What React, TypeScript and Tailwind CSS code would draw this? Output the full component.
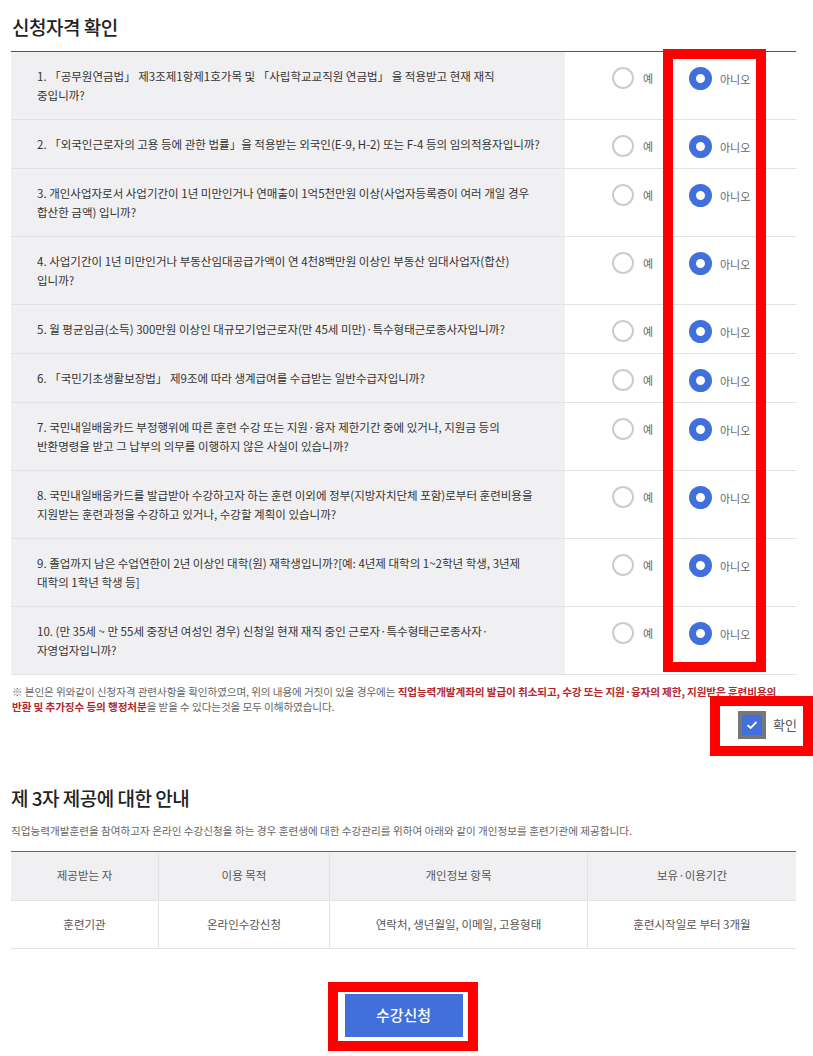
import React from "react";

const questions: string[][] = [
  [
    "1. 「공무원연금법」 제3조제1항제1호가목 및 「사립학교교직원 연금법」 을 적용받고 현재 재직",
    "중입니까?",
  ],
  [
    "2. 「외국인근로자의 고용 등에 관한 법률」을 적용받는 외국인(E-9, H-2) 또는 F-4 등의 임의적용자입니까?",
  ],
  [
    "3. 개인사업자로서 사업기간이 1년 미만인거나 연매출이 1억5천만원 이상(사업자등록증이 여러 개일 경우",
    "합산한 금액) 입니까?",
  ],
  [
    "4. 사업기간이 1년 미만인거나 부동산임대공급가액이 연 4천8백만원 이상인 부동산 임대사업자(합산)",
    "입니까?",
  ],
  [
    "5. 월 평균임금(소득) 300만원 이상인 대규모기업근로자(만 45세 미만)·특수형태근로종사자입니까?",
  ],
  ["6. 「국민기초생활보장법」 제9조에 따라 생계급여를 수급받는 일반수급자입니까?"],
  [
    "7. 국민내일배움카드 부정행위에 따른 훈련 수강 또는 지원·융자 제한기간 중에 있거나, 지원금 등의",
    "반환명령을 받고 그 납부의 의무를 이행하지 않은 사실이 있습니까?",
  ],
  [
    "8. 국민내일배움카드를 발급받아 수강하고자 하는 훈련 이외에 정부(지방자치단체 포함)로부터 훈련비용을",
    "지원받는 훈련과정을 수강하고 있거나, 수강할 계획이 있습니까?",
  ],
  [
    "9. 졸업까지 남은 수업연한이 2년 이상인 대학(원) 재학생입니까?[예: 4년제 대학의 1~2학년 학생, 3년제",
    "대학의 1학년 학생 등]",
  ],
  [
    "10. (만 35세 ~ 만 55세 중장년 여성인 경우) 신청일 현재 재직 중인 근로자·특수형태근로종사자·",
    "자영업자입니까?",
  ],
];

const columns = [
  { head: "제공받는 자", body: "훈련기관", w: "w-[147px]" },
  { head: "이용 목적", body: "온라인수강신청", w: "w-[171px]" },
  { head: "개인정보 항목", body: "연락처, 생년월일, 이메일, 고용형태", w: "w-[258px]" },
  { head: "보유·이용기간", body: "훈련시작일로 부터 3개월", w: "flex-1" },
];

function QuestionRow({ lines }: { lines: string[] }) {
  return (
    <div className="flex border-b border-[#e2e2e4]">
      <div className="w-[554px] bg-[#f0f0f2] pl-[26px] pr-[10px] pt-[15px] pb-[14px] text-[11.5px] leading-[19px] text-[#333] whitespace-nowrap">
        {lines.map((l) => (
          <div key={l}>{l}</div>
        ))}
      </div>
      <div className="flex-1 flex items-start pt-[15px] pl-[47px] text-[11px] leading-[22px] text-[#666]">
        <div className="w-[77px] flex items-center">
          <span className="w-[22px] h-[22px] rounded-full border-2 border-[#cccccc] bg-white" />
          <span className="ml-[9px]">예</span>
        </div>
        <div className="flex items-center">
          <span className="w-[23px] h-[23px] rounded-full border-[7px] border-[#4170dc] bg-white" />
          <span className="ml-[8px]">아니오</span>
        </div>
      </div>
    </div>
  );
}

export default function App() {
  return (
    <div className="relative w-[813px] min-h-[1056px] bg-white font-['Noto_Sans_CJK_KR',sans-serif] text-[#333]">
      {/* 신청자격 확인 */}
      <h2 className="pl-[12px] pt-[15px] mb-[12px] text-[19px] leading-[24px] font-medium text-[#222] tracking-[-0.5px]">
        신청자격 확인
      </h2>

      <div className="ml-[11px] w-[785px] border-t border-[#555]">
        {questions.map((q, i) => (
          <QuestionRow key={i} lines={q} />
        ))}
      </div>

      <p className="ml-[12px] mt-[9px] w-[795px] text-[10.6px] leading-[15px] text-[#666] tracking-[-0.1px] whitespace-nowrap">
        ※ 본인은 위와같이 신청자격 관련사항을 확인하였으며, 위의 내용에 거짓이 있을 경우에는{" "}
        <b className="text-[#b3282d] font-bold">
          직업능력개발계좌의 발급이 취소되고, 수강 또는 지원·융자의 제한, 지원받은 훈련비용의
          <br />
          반환 및 추가징수 등의 행정처분
        </b>
        을 받을 수 있다는것을 모두 이해하였습니다.
      </p>

      <div className="flex justify-end items-center w-[797px] mt-[-3px]">
        <span className="w-[28px] h-[28px] border-[4px] border-[#777] bg-[#4170dc] flex items-center justify-center">
          <svg width="12" height="10" viewBox="0 0 12 10">
            <path d="M1.5 5.2 L4.6 8 L10.5 2" fill="none" stroke="#fff" strokeWidth="1.8" />
          </svg>
        </span>
        <span className="ml-[7px] text-[13px] text-[#555]">확인</span>
      </div>

      {/* 제 3자 제공에 대한 안내 */}
      <h2 className="pl-[11px] mt-[47px] text-[19px] leading-[24px] font-medium text-[#222] tracking-[-0.5px]">
        제 3자 제공에 대한 안내
      </h2>
      <p className="pl-[11px] mt-[13px] text-[10.6px] leading-[16px] text-[#666]">
        직업능력개발훈련을 참여하고자 온라인 수강신청을 하는 경우 훈련생에 대한 수강관리를 위하여 아래와 같이 개인정보를 훈련기관에 제공합니다.
      </p>

      <div className="ml-[11px] w-[785px] mt-[12px] border-t border-[#666] text-[11.5px] text-[#555]">
        <div className="flex h-[49px] bg-[#f0f0f2] border-b border-[#e2e2e4]">
          {columns.map((c, i) => (
            <div
              key={c.head}
              className={`${c.w} flex items-center justify-center ${i > 0 ? "border-l border-[#e2e2e4]" : ""}`}
            >
              {c.head}
            </div>
          ))}
        </div>
        <div className="flex h-[48px] border-b border-[#e2e2e4]">
          {columns.map((c, i) => (
            <div
              key={c.body}
              className={`${c.w} flex items-center justify-center ${i > 0 ? "border-l border-[#e2e2e4]" : ""}`}
            >
              {c.body}
            </div>
          ))}
        </div>
      </div>

      <div className="flex justify-center w-[807px] mt-[45px]">
        <button className="w-[118px] h-[43px] bg-[#4170dc] text-white text-[15px] font-medium">
          수강신청
        </button>
      </div>

      {/* annotation boxes */}
      <div className="absolute left-[663px] top-[49px] w-[103px] h-[623px] border-[10px] border-[#ff0000]" />
      <div className="absolute left-[710px] top-[696px] w-[103px] h-[60px] border-[10px] border-[#ff0000]" />
      <div className="absolute left-[328px] top-[982px] w-[150px] h-[69px] border-[10px] border-[#ff0000]" />
    </div>
  );
}
